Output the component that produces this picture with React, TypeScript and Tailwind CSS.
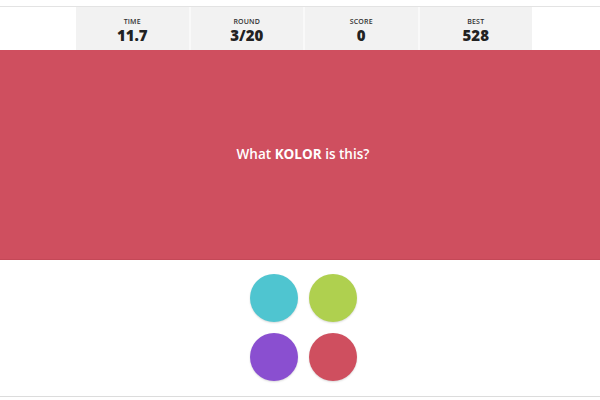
const stats = [
  { label: 'TIME', value: '11.7' },
  { label: 'ROUND', value: '3/20' },
  { label: 'SCORE', value: '0' },
  { label: 'BEST', value: '528' },
]

const colors = ['#4fc5d0', '#afd04f', '#8a4fd0', '#cf4f5f']

export default function App() {
  return (
    <div className="w-[600px] h-[400px] bg-white overflow-hidden" style={{ fontFamily: '"Open Sans", "Noto Sans", sans-serif' }}>
      {/* Barra de estatísticas */}
      <div className="pt-[6px]">
        <div className="border-t border-[#e3e3e3]">
          <div className="ml-[76px] w-[456px] h-[43px] flex">
            {stats.map((s, i) => (
              <div
                key={s.label}
                className={`flex-1 bg-[#f2f2f2] flex flex-col items-center justify-center pt-[3px] ${i > 0 ? 'border-l-2 border-[#f9f9f9]' : ''}`}
              >
                <span className="text-[7px] leading-none font-semibold text-[#333] tracking-wide">{s.label}</span>
                <span className="text-[15px] leading-none font-extrabold text-[#222] mt-[3px]">{s.value}</span>
              </div>
            ))}
          </div>
        </div>
      </div>

      {/* Pergunta */}
      <div className="h-[210px] bg-[#cf4f5f] border-b border-[#c44857] flex items-center justify-center">
        <p className="text-white text-[13.5px] font-semibold ml-[6px]">
          What <span className="font-bold">KOLOR</span> is this?
        </p>
      </div>

      {/* Opções */}
      <div className="h-[137px] border-b border-[#dcdcdc] pt-[14px] flex justify-center">
        <div className="grid grid-cols-2 gap-[11px] ml-[7px] h-fit">
          {colors.map((c) => (
            <div
              key={c}
              className="w-[48px] h-[48px] rounded-full shadow-[0_1px_2px_rgba(0,0,0,0.15)]"
              style={{ backgroundColor: c }}
            />
          ))}
        </div>
      </div>
    </div>
  )
}
